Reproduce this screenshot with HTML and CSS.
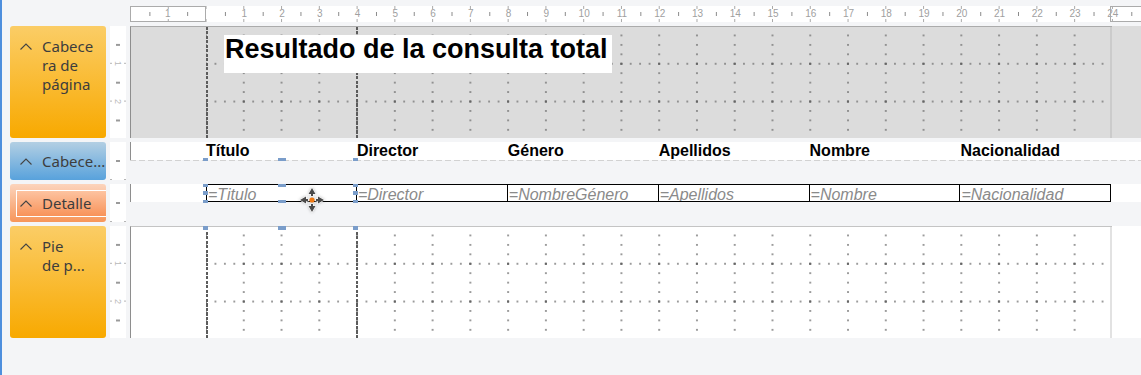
FILE: index.html
```html
<!DOCTYPE html>
<html>
<head>
  <title>Informe - Diseño</title>
  <link rel="stylesheet" href="styles.css">
</head>
<body>
<div class="designer">
  <div class="hruler">
    <div class="rmargin left"><span>1</span></div>
    <div class="rtrack">
      <span>1</span><span>2</span><span>3</span><span>4</span><span>5</span><span>6</span>
      <span>7</span><span>8</span><span>9</span><span>10</span><span>11</span><span>12</span>
      <span>13</span><span>14</span><span>15</span><span>16</span><span>17</span><span>18</span>
      <span>19</span><span>20</span><span>21</span><span>22</span><span>23</span><span>24</span>
    </div>
    <div class="rmargin right"></div>
  </div>

  <!-- Cabecera de página -->
  <div class="panel orange">
    <svg class="chev" viewBox="0 0 12 7"><polyline points="0.5,6.5 6,1 11.5,6.5"/></svg>
    <div class="label">Cabece<br>ra de<br>página</div>
  </div>
  <div class="vruler"><span>1</span><span>2</span></div>
  <div class="canvas hdr">
    <div class="inner">
      <div class="page">
        <div class="title">Resultado de la consulta total</div>
      </div>
    </div>
  </div>

  <!-- Cabecera de grupo -->
  <div class="panel blue">
    <svg class="chev" viewBox="0 0 12 7"><polyline points="0.5,6.5 6,1 11.5,6.5"/></svg>
    <div class="label">Cabece...</div>
  </div>
  <div class="vruler"></div>
  <div class="canvas grp">
    <div class="band">
      <div class="col">Título</div>
      <div class="col">Director</div>
      <div class="col">Género</div>
      <div class="col">Apellidos</div>
      <div class="col">Nombre</div>
      <div class="col">Nacionalidad</div>
    </div>
    <div class="split"></div>
  </div>

  <!-- Detalle -->
  <div class="panel det">
    <div class="in">
      <svg class="chev" viewBox="0 0 12 7"><polyline points="0.5,6.5 6,1 11.5,6.5"/></svg>
      <div class="label">Detalle</div>
    </div>
  </div>
  <div class="vruler"></div>
  <div class="canvas det">
    <div class="band">
      <div class="cell">=Titulo</div>
      <div class="cell">=Director</div>
      <div class="cell">=NombreGénero</div>
      <div class="cell">=Apellidos</div>
      <div class="cell">=Nombre</div>
      <div class="cell">=Nacionalidad</div>
    </div>
  </div>

  <!-- Pie de página -->
  <div class="panel orange">
    <svg class="chev" viewBox="0 0 12 7"><polyline points="0.5,6.5 6,1 11.5,6.5"/></svg>
    <div class="label">Pie<br>de p...</div>
  </div>
  <div class="vruler"><span>1</span><span>2</span></div>
  <div class="canvas ftr">
    <div class="inner">
      <div class="page"></div>
    </div>
  </div>

  <!-- selection handles -->
  <div class="handle l y158"></div><div class="handle m y158"></div><div class="handle r y158"></div>
  <div class="handle l y184"></div><div class="handle m y184"></div><div class="handle r y184"></div>
  <div class="handle l y191"></div><div class="handle r y191"></div>
  <div class="handle l y200"></div><div class="handle m y200"></div><div class="handle r y200"></div>
  <div class="handle l y226"></div><div class="handle m y226"></div><div class="handle r y226"></div>

  <svg class="move" viewBox="0 0 26 26">
    <g class="arrows">
      <path d="M13 1 L16.5 7 L14 7 L14 9 L12 9 L12 7 L9.5 7 Z"/>
      <path d="M13 25 L16.5 19 L14 19 L14 17 L12 17 L12 19 L9.5 19 Z"/>
      <path d="M1 13 L7 9.5 L7 12 L9 12 L9 14 L7 14 L7 16.5 Z"/>
      <path d="M25 13 L19 9.5 L19 12 L17 12 L17 14 L19 14 L19 16.5 Z"/>
    </g>
    <circle cx="13" cy="13" r="2.6" fill="#f07a14"/>
  </svg>
</div>
</body>
</html>
```

FILE: styles.css
```css
body {
  margin: 0;
  min-height: 100vh;
  box-sizing: border-box;
  border-left: 2px solid #4e8fdd;
  background: #f4f5f7;
  font-family: "Noto Sans", sans-serif;
}

.designer {
  position: relative;
  display: grid;
  grid-template-columns: 96px 16px 1fr;
  grid-template-rows: 16px 112px 38px 38px 112px;
  gap: 4px;
  padding: 6px 0 0 8px;
}

/* horizontal ruler */
.hruler {
  grid-column: 3;
  display: flex;
  height: 16px;
  background-color: #fff;
  background-image:
    linear-gradient(to right, transparent 18.4px, #8a8a8a 18.4px, #8a8a8a 19.4px, transparent 19.4px),
    linear-gradient(to right, #a8a8a8 1px, transparent 1px),
    linear-gradient(to right, #a8a8a8 1px, transparent 1px);
  background-size: 37.78px 4px, 37.78px 3px, 37.78px 3px;
  background-position: 0.5px 6px, 0 0, 0 100%;
  background-repeat: repeat-x;
}

.hruler span {
  flex: 0 0 37.78px;
  text-align: center;
  font: 10px/16px "Liberation Sans", sans-serif;
  color: #a0a0a0;
}

.rmargin {
  box-sizing: border-box;
  border: 1px solid #ababab;
  display: flex;
}

.rmargin.left {
  width: 76px;
  flex-shrink: 0;
  padding-left: 17.89px;
}

.rmargin.left span {
  line-height: 14px;
}

.rmargin.right {
  flex: 1;
  border-right: 0;
}

.rtrack {
  width: 904px;
  flex-shrink: 0;
  box-sizing: border-box;
  padding-left: 19.4px;
  display: flex;
}

/* section labels */
.panel {
  display: flex;
  gap: 10px;
  padding: 11px 4px 0 10px;
  border-radius: 3px;
  font-size: 15px;
  line-height: 18.8px;
  color: #3d3d3d;
  white-space: nowrap;
}

.panel.orange {
  background: linear-gradient(#fbcd66, #f8a900);
}

.panel.blue {
  align-items: center;
  padding-top: 0;
  background: linear-gradient(#b3cfe3, #58a2dc);
}

.panel.det {
  padding: 6px 0 5px 6px;
  background: linear-gradient(#fcd4bc, #f7965a);
}

.panel.det .in {
  flex: 1;
  display: flex;
  align-items: center;
  gap: 10px;
  padding-left: 3px;
  border: 1px solid #fff;
  border-right: 0;
  background: linear-gradient(#fdc3a0, #f8935a);
}

.chev {
  width: 12px;
  height: 7px;
  flex-shrink: 0;
  margin-top: 6px;
}

.panel.blue .chev,
.panel.det .chev {
  margin-top: 0;
}

.chev polyline {
  fill: none;
  stroke: #444;
  stroke-width: 1.1;
}

/* vertical ruler */
.vruler {
  overflow: hidden;
  display: flex;
  flex-direction: column;
  padding-top: 18.9px;
  box-sizing: border-box;
  background-color: #fff;
  background-image:
    linear-gradient(to bottom, transparent 18.4px, #9a9a9a 18.4px, #9a9a9a 19.4px, transparent 19.4px),
    linear-gradient(to bottom, transparent 36.8px, #b5b5b5 36.8px, #b5b5b5 37.8px, transparent 37.8px),
    linear-gradient(to bottom, transparent 36.8px, #b5b5b5 36.8px, #b5b5b5 37.8px, transparent 37.8px);
  background-size: 4px 37.8px, 2px 37.8px, 2px 37.8px;
  background-position: 6px 0, 0 0, 14px 0;
  background-repeat: repeat-y;
}

.vruler span {
  flex: 0 0 37.8px;
  display: flex;
  align-items: center;
  justify-content: center;
  writing-mode: vertical-rl;
  font: 9px "Liberation Sans", sans-serif;
  color: #b8b8b8;
}

/* section canvases */
.canvas {
  display: flex;
  min-width: 0;
}

.canvas .inner {
  width: 982px;
  flex-shrink: 0;
  box-sizing: border-box;
  padding-left: 75px;
  border-left: 1px solid #8e8e8e;
}

.page {
  width: 906px;
  height: 100%;
  box-sizing: border-box;
  background-image:
    repeating-linear-gradient(to bottom, #5c5c5c 0 3px, transparent 3px 4.5px),
    repeating-linear-gradient(to bottom, #5c5c5c 0 3px, transparent 3px 4.5px),
    radial-gradient(circle, #666 1.1px, transparent 1.5px),
    radial-gradient(circle, #707070 0.55px, transparent 1px),
    radial-gradient(circle, #707070 0.55px, transparent 1px);
  background-size: 2px 100%, 2px 100%, 37.78px 37.78px, 37.78px 9.445px, 9.445px 37.78px;
  background-position: 0 0, 150px 0, -18.89px -19.89px, -18.89px -5.72px, -4.72px -19.89px;
  background-repeat: no-repeat, no-repeat, repeat, repeat, repeat;
}

.canvas.hdr {
  background: #dcdcdc;
}

.canvas.hdr .inner {
  border-top: 1px solid #ababab;
}

.canvas.hdr .page {
  padding: 8px 0 0 18px;
  border-right: 2px solid #cbcbcb;
}

.title {
  width: 388px;
  height: 38px;
  box-sizing: border-box;
  padding-left: 1px;
  background: #fff;
  font: bold 27px/29px "Liberation Sans", sans-serif;
  color: #000;
}

.canvas.ftr {
  background: #fff;
}

.canvas.ftr .inner {
  border-top: 1px solid #c4c4c4;
}

.canvas.ftr .page {
  border-right: 2px solid #e2e2e2;
}

.canvas.grp,
.canvas.det {
  display: block;
}

.band {
  height: 18px;
  box-sizing: border-box;
  padding-left: 75px;
  border-left: 1px solid #8e8e8e;
  background: #fff;
  display: grid;
  grid-template-columns: repeat(6, 150.9px);
}

.split {
  height: 1px;
  background: repeating-linear-gradient(to right, #d2d2d2 0 6px, transparent 6px 9px);
}

.col {
  font: bold 16px/18px "Liberation Sans", sans-serif;
  color: #000;
  white-space: nowrap;
}

.cell {
  box-sizing: border-box;
  height: 18px;
  padding: 1px 0 0 1px;
  border: 1px solid #000;
  border-left: 0;
  overflow: hidden;
  white-space: nowrap;
  font: italic 16px/17px "Liberation Sans", sans-serif;
  color: #8a8a8a;
}

.cell:first-child {
  border-left: 1px solid #000;
}

/* selection handles, over the sections */
.handle {
  position: absolute;
  height: 3px;
  background: #7a9dca;
}

.handle.l { left: 201px; width: 5px; }
.handle.m { left: 276px; width: 8px; }
.handle.r { left: 351px; width: 5px; }
.handle.y158 { top: 158px; }
.handle.y184 { top: 184px; }
.handle.y191 { top: 191px; height: 4px; }
.handle.y200 { top: 200px; }
.handle.y226 { top: 226px; height: 4px; }

.move {
  position: absolute;
  left: 297px;
  top: 187px;
  width: 26px;
  height: 26px;
  filter: drop-shadow(0 0 1.5px rgba(0, 0, 0, 0.25));
}

.move .arrows path {
  fill: #4a4a4a;
  stroke: #fff;
  stroke-width: 1.2;
  paint-order: stroke;
  stroke-linejoin: round;
}
```
